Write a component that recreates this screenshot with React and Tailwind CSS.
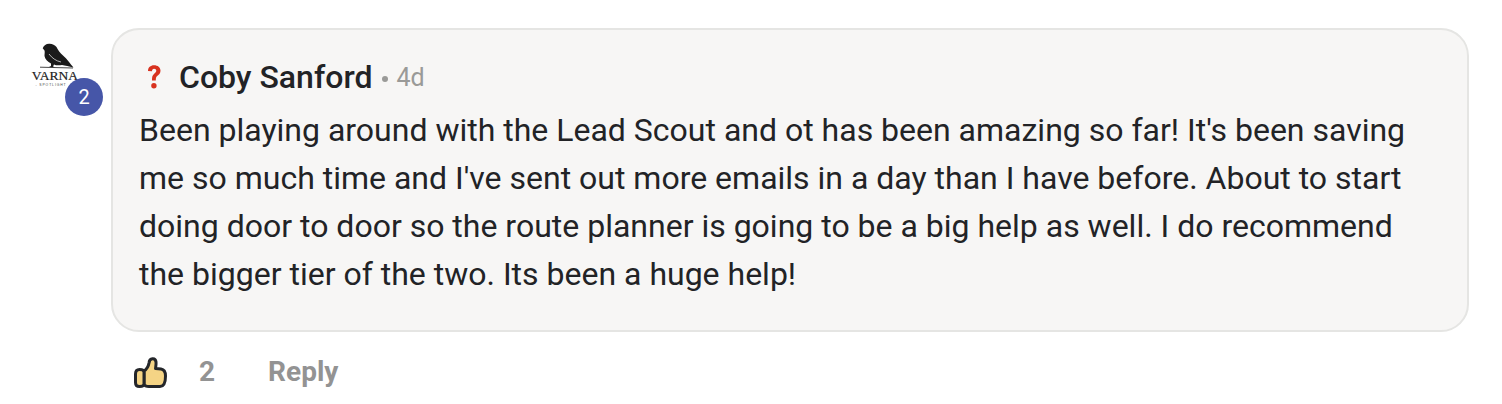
import React from "react";

function Crow() {
  return (
    <svg width="54" height="54" viewBox="0 0 54 54" className="block">
      <path d="M12.700 8.300 C14 5.500 16 3.800 19 3.800 C22 3.600 25 5 26.500 7 C28 10 30 13 33 15.500 C37 19 40.500 24 43.500 27.500 C39 26.500 35 25.500 32 25 C29 25.500 26 25.500 24 24.500 L23 26.500 L25 27.300 L19 27 L21 26 L21 23.500 C17.500 22 15 19 14.500 16 C14.500 14 15 12 14.500 10.500 Z" fill="#1b1b1b" />
      <path d="M19 14 C22 18 26 21 31 22" stroke="#f7f7f7" strokeWidth="0.700" fill="none" />
      <path d="M10 27.200 L43 28" stroke="#1b1b1b" strokeWidth="0.800" />
      <text x="25" y="39.500" textAnchor="middle" fontFamily="Liberation Serif, serif" fontSize="13.500" stroke="#1c1c1c" strokeWidth="0.200" fill="#1c1c1c">VARNA</text>
      <text x="21" y="46" textAnchor="middle" fontFamily="Liberation Sans, sans-serif" fontSize="3.400" letterSpacing="0.900" fill="#444">- SPOTLIGHT</text>
    </svg>
  );
}

function Question() {
  return (
    <svg width="16" height="26" viewBox="0 0 16 26" className="block">
      <path d="M2 7 C2 3.500 4.500 1.300 8 1.300 C11.800 1.300 14.500 3.500 14.500 6.800 C14.500 9.500 12.800 10.800 11.200 12 C10 13 9.800 14 9.800 16.500 H6 C6 13 6.200 11.500 8 10 C9.500 8.800 10.300 8 10.300 6.800 C10.300 5.500 9.400 4.800 8.100 4.800 C6.700 4.800 6 5.800 6 7.300 Z" fill="#d8321f" />
      <circle cx="7.900" cy="21.800" r="2.700" fill="#d8321f" />
    </svg>
  );
}

function Thumb() {
  return (
    <svg width="36" height="36" viewBox="0 0 36 36" className="block">
      <path d="M12 17 C15 15 16.500 12 17 9 C17.500 3.500 23.500 3.500 24 8 C24.300 10.500 23.800 12.500 23.500 14.500 L29 15 C32 15.500 33.500 18 33.500 22 C33.500 27 32.500 32.500 28 32.500 L17 32.500 C14.500 32.500 12 31.500 12 30 Z" fill="#f5d485" stroke="#24262a" strokeWidth="3" strokeLinejoin="round" />
      <path d="M3.500 20 C3.500 17 5 15.500 7.500 15.500 C10 15.500 12 16.500 12 18 V30 C12 31.500 10 32.500 7.500 32.500 C5 32.500 3.500 31 3.500 28.500 Z" fill="#f5d485" stroke="#24262a" strokeWidth="3" strokeLinejoin="round" />
    </svg>
  );
}

export default function App() {
  return (
    <div className="w-[1502px] h-[404px] bg-white overflow-hidden flex pt-7 pl-[30px] pr-[33px] font-['Roboto',sans-serif]">
      <div className="relative w-[51px] h-[51px] mr-[30px] shrink-0 mt-[12px]">
        <Crow />
        <span className="absolute left-[35px] top-[38px] w-[38px] h-[38px] rounded-full bg-[#4656a8] text-white text-[20px] flex items-center justify-center">2</span>
      </div>
      <div className="flex-1">
        <div className="h-[304px] rounded-[28px] border-2 border-[#e5e5e3] bg-[#f7f6f5] pl-[26px] pr-[40px] pt-[29px]">
          <div className="flex items-center h-[36px] text-[#222326]">
            <span className="w-[40px] pl-[7px]"><Question /></span>
            <span className="text-[32px] font-medium">Coby Sanford</span>
            <span className="w-[6px] h-[6px] rounded-full bg-[#9a9a98] ml-[10px] mt-[4px]" />
            <span className="text-[#9a9a98] text-[25px] ml-[8px] mt-[2px]">4d</span>
          </div>
          <p className="mt-[11px] text-[32px] leading-[48px] text-[#222326]">
            Been playing around with the Lead Scout and ot has been amazing so far! It's been saving me so much time and I've sent out more emails in a day than I have before. About to start doing door to door so the route planner is going to be a big help as well. I do recommend the bigger tier of the two. Its been a huge help!
          </p>
        </div>
        <div className="flex items-center mt-[19px] pl-[21px] text-[#939393] text-[28px] font-bold">
          <Thumb />
          <span className="ml-[31px]">2</span>
          <span className="ml-[53px]">Reply</span>
        </div>
      </div>
    </div>
  );
}
